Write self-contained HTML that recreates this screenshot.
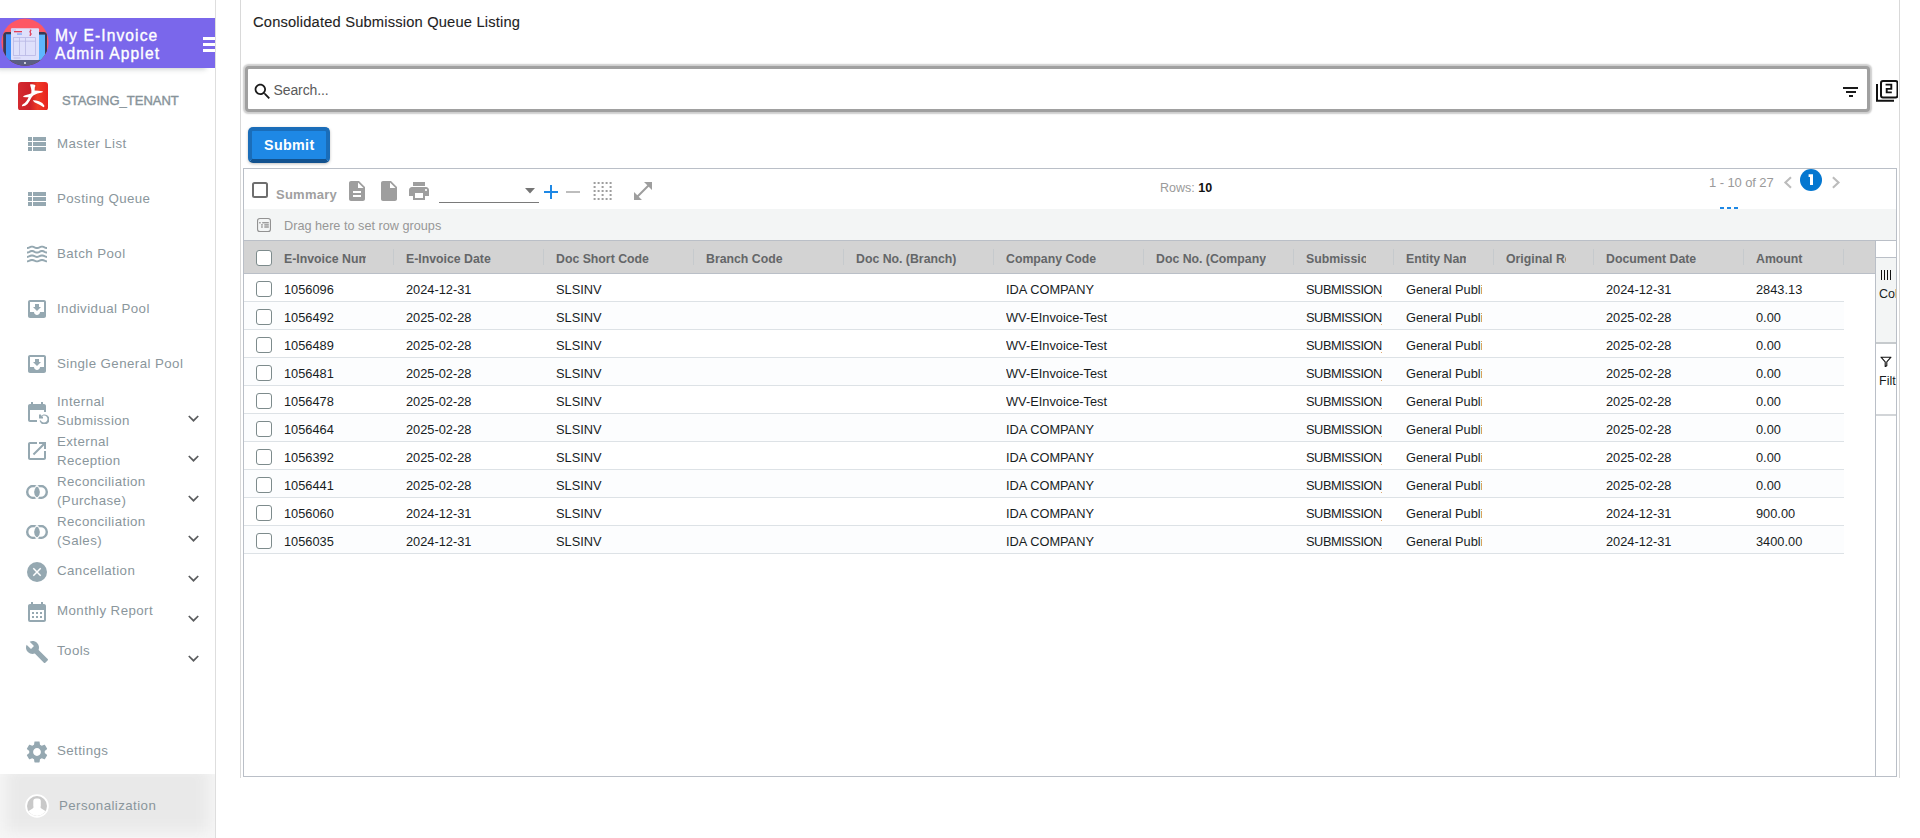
<!DOCTYPE html>
<html><head><meta charset="utf-8">
<style>
*{box-sizing:border-box;margin:0;padding:0}
html,body{width:1920px;height:838px;overflow:hidden;background:#fff;font-family:"Liberation Sans",sans-serif;position:relative}
.a{position:absolute}
/* sidebar */
#sb{position:absolute;left:0;top:0;width:216px;height:838px;border-right:1px solid #dedede;background:#fff}
#hdr{position:absolute;left:0;top:18px;width:215px;height:50px;background:#7a67eb;box-shadow:-6px 4px 5px -3px rgba(50,70,70,.28)}
.ttl{position:absolute;left:55px;color:#fff;font-size:15.6px;letter-spacing:1.1px;white-space:nowrap;-webkit-text-stroke:.35px #fff}
.mi{position:absolute;left:57px;color:#8a969c;font-size:13.3px;letter-spacing:.42px;white-space:nowrap;line-height:19px}
.ic{position:absolute;fill:#95a8b1}
.chev{position:absolute;left:188px;width:11px;height:7px}
/* main */
#main{position:absolute;left:240px;top:0;width:1660px;height:778px;border-left:1px solid #d9d9d9;border-right:1px solid #d9d9d9}
.hc{position:absolute;top:251.3px;font-size:12.3px;font-weight:bold;color:#646668;white-space:nowrap;overflow:hidden;line-height:16px}
.sep{position:absolute;top:249px;width:1px;height:16px;background:#c6cacd}
.row{position:absolute;left:244px;width:1600px;height:28px;border-bottom:1px solid #dde2e6}
.row.o{background:#fcfdfe}
.c{position:absolute;top:8px;font-size:12.8px;color:#181d1f;white-space:nowrap;overflow:hidden;line-height:15px}
.cb{position:absolute;width:16px;height:16px;border:1.6px solid #7d8b8c;border-radius:3px;background:#fff}
</style></head>
<body>
<div id="sb">
  <div id="hdr">
    <svg class="a" style="left:0;top:0" width="52" height="50" viewBox="0 18 52 50">
      <defs><clipPath id="lc"><circle cx="25" cy="42.2" r="23.6"/></clipPath></defs>
      <circle cx="25" cy="42.2" r="23.6" fill="#fd5765"/>
      <g clip-path="url(#lc)">
      <rect x="3.2" y="32" width="43.8" height="40" rx="3.5" fill="#383a55"/>
      <rect x="0" y="60" width="52" height="12" fill="#5b5f82"/>
      <rect x="6" y="34.6" width="39" height="25.4" fill="#5eb6ff"/>
      <rect x="6" y="34.6" width="5.2" height="25.4" fill="#3f8ef7"/>
      <rect x="11" y="28.2" width="28" height="31.8" rx="1" fill="#dfe0fb"/>
      <rect x="11.4" y="28.6" width="4.6" height="3" fill="#cfd0f5"/>
      <rect x="14" y="31" width="8" height="1.3" fill="#e23b55"/>
      <rect x="17" y="33.4" width="5" height="1.3" fill="#7da5f5"/>
      <path d="M31.5 30.3 Q29.2 31 29.8 32.3 Q31.5 33 31.3 34.2 Q30.8 35.3 29.5 35.2 M30.4 29.5 V36" fill="none" stroke="#e23b55" stroke-width=".9"/>
      <rect x="13.5" y="37.6" width="22" height="17.8" fill="none" stroke="#b8b7e5" stroke-width=".8"/>
      <line x1="13.5" y1="41.2" x2="35.5" y2="41.2" stroke="#b8b7e5" stroke-width=".8"/>
      <line x1="19.5" y1="37.6" x2="19.5" y2="55.4" stroke="#b8b7e5" stroke-width=".8"/>
      <line x1="25.5" y1="37.6" x2="25.5" y2="55.4" stroke="#b8b7e5" stroke-width=".8"/>
      <rect x="13.5" y="57.6" width="7" height=".8" fill="#b8b7e5"/>
      <circle cx="25" cy="63" r="0.9" fill="#fff"/>
      </g>
    </svg>
    <div class="ttl" style="top:8.5px;line-height:18px">My E-Invoice<br>Admin Applet</div>
    <div class="a" style="left:203px;top:19px;width:12px;height:3px;background:#fff"></div>
    <div class="a" style="left:203px;top:25px;width:12px;height:3px;background:#fff"></div>
    <div class="a" style="left:203px;top:31px;width:12px;height:3px;background:#fff"></div>
  </div>

  <!-- tenant -->
  <svg class="a" style="left:18px;top:81.5px" width="30" height="28.6" viewBox="0 0 30 28.6">
    <defs><linearGradient id="rg" x1="0" x2="1"><stop offset="0" stop-color="#d42a30"/><stop offset=".4" stop-color="#cc1f28"/><stop offset=".65" stop-color="#ee3a25"/><stop offset="1" stop-color="#e8221f"/></linearGradient></defs>
    <rect x="0" y="0" width="30" height="28.6" rx="3" fill="url(#rg)"/>
    <path fill="#fff" d="M12 2.4 Q14.5 1.8 17.2 2.9 Q17.6 4 16.8 5.5 L16.6 8.5 Q20 8.6 24.8 9.2 Q25.2 10 24 10.6 Q19 11.2 15.6 13.2 Q14.2 14.5 13.2 16 Q11.5 19.5 9.5 22 Q7 24.5 3.9 24.2 Q3.7 23 4.8 22.2 Q6.8 21.5 8.5 19 Q10 16.8 10.6 15.2 Q8 15.2 4.9 15 Q5.5 13.6 8 13 Q11 12.3 13.3 11.2 Q13.6 8 13.1 6.5 Q12.6 4.5 12 2.4Z"/>
    <path fill="#fff" d="M14.8 18.4 Q17.5 18.2 21 19.3 Q25 20.8 26.3 23.5 Q26.5 25.3 25.6 25.2 Q22 22.8 18.5 21.2 Q16.2 20.3 14.8 18.4Z"/>
  </svg>
  <div class="a" style="left:62px;top:92.5px;font-size:13px;color:#87939a;letter-spacing:0px;white-space:nowrap;-webkit-text-stroke:.4px #87939a">STAGING_TENANT</div>

  <svg class="ic" style="left:25px;top:132px" width="24" height="24" viewBox="0 0 24 24"><path d="M3 14h4v-4H3v4zm0 5h4v-4H3v4zM3 9h4V5H3v4zm5 5h13v-4H8v4zm0 5h13v-4H8v4zM8 5v4h13V5H8z"/></svg>
  <div class="mi" style="top:134px">Master List</div>
  <svg class="ic" style="left:25px;top:187px" width="24" height="24" viewBox="0 0 24 24"><path d="M3 14h4v-4H3v4zm0 5h4v-4H3v4zM3 9h4V5H3v4zm5 5h13v-4H8v4zm0 5h13v-4H8v4zM8 5v4h13V5H8z"/></svg>
  <div class="mi" style="top:189px">Posting Queue</div>
  <svg class="ic" style="left:25px;top:242px" width="24" height="24" viewBox="0 0 24 24"><path d="M17 16.99c-1.35 0-2.2.42-2.95.8-.65.33-1.18.6-2.05.6-.9 0-1.4-.25-2.05-.6-.75-.38-1.570-.8-2.95-.8s-2.2.42-2.95.8c-.65.33-1.17.6-2.05.6v1.95c1.35 0 2.2-.42 2.95-.8.65-.33 1.17-.6 2.05-.6s1.4.25 2.05.6c.75.38 1.57.8 2.95.8s2.2-.42 2.95-.8c.65-.33 1.18-.6 2.05-.6.9 0 1.4.25 2.05.6.75.38 1.58.8 2.95.8v-1.950c-.9 0-1.4-.25-2.05-.6-.75-.38-1.6-.8-2.95-.8zm0-4.45c-1.35 0-2.2.43-2.95.8-.65.32-1.18.6-2.05.6-.9 0-1.4-.25-2.05-.6-.75-.38-1.57-.8-2.95-.8s-2.2.43-2.95.8c-.65.32-1.17.6-2.05.6v1.95c1.35 0 2.2-.43 2.95-.8.65-.35 1.15-.6 2.05-.6s1.4.25 2.05.6c.75.38 1.57.8 2.95.8s2.2-.43 2.95-.8c.65-.35 1.15-.6 2.05-.6.9 0 1.4.25 2.05.6.75.38 1.58.8 2.95.8v-1.95c-.9 0-1.4-.25-2.05-.6-.75-.38-1.6-.8-2.95-.8zm2.95-8.08c-.75-.38-1.58-.8-2.95-.8s-2.2.42-2.95.8c-.65.32-1.18.6-2.05.6-.9 0-1.4-.25-2.05-.6-.75-.37-1.57-.8-2.95-.8s-2.2.42-2.95.8c-.65.33-1.17.6-2.05.6v1.93c1.35 0 2.2-.43 2.95-.8.65-.33 1.17-.6 2.05-.6s1.4.25 2.05.6c.75.38 1.57.8 2.950.8s2.2-.43 2.95-.8c.65-.32 1.18-.6 2.05-.6.9 0 1.4.25 2.05.6.75.38 1.58.8 2.95.8V5.04c-.9 0-1.4-.25-2.05-.58zM17 8.09c-1.35 0-2.2.43-2.95.8-.65.35-1.15.6-2.05.6s-1.4-.25-2.05-.6c-.75-.38-1.57-.8-2.95-.8s-2.2.43-2.95.8c-.65.35-1.15.6-2.05.6v1.95c1.35 0 2.2-.43 2.95-.8.65-.32 1.18-.6 2.05-.6s1.4.25 2.05.6c.75.38 1.57.8 2.95.8s2.2-.43 2.95-.8c.65-.32 1.18-.6 2.05-.6.9 0 1.4.25 2.05.6.75.38 1.58.8 2.95.8V9.49c-.9 0-1.4-.25-2.05-.6-.75-.38-1.6-.8-2.95-.8z"/></svg>
  <div class="mi" style="top:244px">Batch Pool</div>
  <svg class="ic" style="left:25px;top:297px" width="24" height="24" viewBox="0 0 24 24"><path d="M19 3H4.99c-1.11 0-1.98.9-1.98 2L3 19c0 1.1.88 2 1.99 2H19c1.1 0 2-.9 2-2V5c0-1.1-.9-2-2-2zm0 12h-4c0 1.66-1.35 3-3 3s-3-1.34-3-3H4.99V5H19v10zm-3-5h-2V7h-4v3H8l4 4 4-4z"/></svg>
  <div class="mi" style="top:299px">Individual Pool</div>
  <svg class="ic" style="left:25px;top:352px" width="24" height="24" viewBox="0 0 24 24"><path d="M19 3H4.99c-1.11 0-1.98.9-1.98 2L3 19c0 1.1.88 2 1.99 2H19c1.1 0 2-.9 2-2V5c0-1.1-.9-2-2-2zm0 12h-4c0 1.66-1.35 3-3 3s-3-1.34-3-3H4.99V5H19v10zm-3-5h-2V7h-4v3H8l4 4 4-4z"/></svg>
  <div class="mi" style="top:354px">Single General Pool</div>

  <svg class="ic" style="left:25px;top:400px" width="24" height="24" viewBox="0 0 24 24"><path d="M21 12V6c0-1.1-.9-2-2-2h-1V2h-2v2H8V2H6v2H5c-1.1 0-2 .9-2 2v14c0 1.1.9 2 2 2h7v-2H5V10h14v2h2zm-5.36 8c.43 1.45 1.77 2.5 3.36 2.5 1.93 0 3.5-1.57 3.5-3.5s-1.57-3.5-3.5-3.5c-.95 0-1.82.38-2.45 1H18v2h-4v-4h2v1.43c.9-.88 2.14-1.43 3.5-1.43 2.76 0 5 2.24 5 5s-2.24 5-5 5c-2.42 0-4.44-1.72-4.9-4h1.54z"/></svg>
  <div class="mi" style="top:392px">Internal<br>Submission</div>
  <svg class="ic" style="left:25px;top:439px" width="24" height="24" viewBox="0 0 24 24"><path d="M19 19H5V5h7V3H5c-1.11 0-2 .9-2 2v14c0 1.1.89 2 2 2h14c1.1 0 2-.9 2-2v-7h-2v7zM14 3v2h3.59l-9.830 9.83 1.41 1.41L19 6.41V10h2V3h-7z"/></svg>
  <div class="mi" style="top:432px">External<br>Reception</div>
  <svg class="ic" style="left:25px;top:479.8px" width="24" height="24" viewBox="0 0 24 24"><defs><mask id="mL"><rect x="0" y="0" width="24" height="24" fill="#fff"/><circle cx="15.8" cy="12" r="7.8" fill="#000"/></mask><mask id="mR"><rect x="0" y="0" width="24" height="24" fill="#fff"/><circle cx="8.2" cy="12" r="7.8" fill="#000"/></mask><clipPath id="cL"><circle cx="8.2" cy="12" r="6.7"/></clipPath></defs><circle cx="8.2" cy="12" r="6" fill="none" stroke="#95a8b1" stroke-width="2.4" mask="url(#mL)"/><circle cx="15.8" cy="12" r="6" fill="none" stroke="#95a8b1" stroke-width="2.4" mask="url(#mR)"/><circle cx="15.8" cy="12" r="6.7" clip-path="url(#cL)"/></svg>
  <div class="mi" style="top:472px">Reconciliation<br>(Purchase)</div>
  <svg class="ic" style="left:25px;top:519.8px" width="24" height="24" viewBox="0 0 24 24"><circle cx="8.2" cy="12" r="6" fill="none" stroke="#95a8b1" stroke-width="2.4" mask="url(#mL)"/><circle cx="15.8" cy="12" r="6" fill="none" stroke="#95a8b1" stroke-width="2.4" mask="url(#mR)"/><circle cx="15.8" cy="12" r="6.7" clip-path="url(#cL)"/></svg>
  <div class="mi" style="top:512px">Reconciliation<br>(Sales)</div>
  <svg class="ic" style="left:25px;top:560px" width="24" height="24" viewBox="0 0 24 24"><circle cx="12" cy="12" r="10"/><path d="M8.3 8.3 L15.7 15.7 M15.7 8.3 L8.3 15.7" stroke="#fff" stroke-width="1.5"/></svg>
  <div class="mi" style="top:561px">Cancellation</div>
  <svg class="ic" style="left:25px;top:600px" width="24" height="24" viewBox="0 0 24 24"><path d="M19 4h-1V2h-2v2H8V2H6v2H5c-1.11 0-1.99.9-1.99 2L3 20a2 2 0 0 0 2 2h14c1.1 0 2-.9 2-2V6c0-1.1-.9-2-2-2zm0 16H5V10h14v10zM9 14H7v-2h2v2zm4 0h-2v-2h2v2zm4 0h-2v-2h2v2zm-8 4H7v-2h2v2zm4 0h-2v-2h2v2zm4 0h-2v-2h2v2z"/></svg>
  <div class="mi" style="top:601px">Monthly Report</div>
  <svg class="ic" style="left:25px;top:640px" width="24" height="24" viewBox="0 0 24 24"><path d="M22.7 19l-9.1-9.1c.9-2.3.4-5-1.5-6.9-2-2-5-2.4-7.4-1.3L9 6 6 9 1.6 4.7C.4 7.100.9 10.1 2.9 12.1c1.9 1.9 4.6 2.4 6.9 1.5l9.1 9.1c.4.4 1 .4 1.4 0l2.3-2.3c.5-.4.5-1.1.1-1.4z"/></svg>
  <div class="mi" style="top:641px">Tools</div>

  <svg class="chev" style="top:415px" viewBox="0 0 11 7"><path fill="none" stroke="#5a5c5e" stroke-width="1.7" d="M.8 1 L5.5 5.7 L10.2 1"/></svg>
  <svg class="chev" style="top:455px" viewBox="0 0 11 7"><path fill="none" stroke="#5a5c5e" stroke-width="1.7" d="M.8 1 L5.5 5.7 L10.2 1"/></svg>
  <svg class="chev" style="top:495px" viewBox="0 0 11 7"><path fill="none" stroke="#5a5c5e" stroke-width="1.7" d="M.8 1 L5.5 5.7 L10.2 1"/></svg>
  <svg class="chev" style="top:535px" viewBox="0 0 11 7"><path fill="none" stroke="#5a5c5e" stroke-width="1.7" d="M.8 1 L5.5 5.7 L10.2 1"/></svg>
  <svg class="chev" style="top:575px" viewBox="0 0 11 7"><path fill="none" stroke="#5a5c5e" stroke-width="1.7" d="M.8 1 L5.5 5.7 L10.2 1"/></svg>
  <svg class="chev" style="top:615px" viewBox="0 0 11 7"><path fill="none" stroke="#5a5c5e" stroke-width="1.7" d="M.8 1 L5.5 5.7 L10.2 1"/></svg>
  <svg class="chev" style="top:655px" viewBox="0 0 11 7"><path fill="none" stroke="#5a5c5e" stroke-width="1.7" d="M.8 1 L5.5 5.7 L10.2 1"/></svg>

  <svg class="ic" style="left:24px;top:738.6px" width="26" height="26" viewBox="0 0 24 24"><path d="M19.14 12.94c.04-.3.06-.61.06-.94 0-.32-.02-.64-.07-.94l2.03-1.58c.18-.14.23-.41.12-.61l-1.92-3.32c-.12-.22-.37-.29-.59-.22l-2.39.96c-.5-.38-1.03-.7-1.62-.94l-.36-2.54c-.04-.24-.24-.41-.48-.41h-3.84c-.24 0-.43.17-.47.41l-.36 2.54c-.59.24-1.13.57-1.62.94l-2.39-.96c-.22-.08-.47 0-.59.22L2.74 8.87c-.12.21-.08.47.12.61l2.03 1.58c-.05.3-.09.63-.09.94s.02.64.07.94l-2.03 1.58c-.18.14-.23.41-.12.61l1.92 3.32c.12.22.37.29.59.22l2.39-.96c.5.38 1.03.7 1.62.94l.36 2.54c.05.24.24.41.48.41h3.84c.24 0 .44-.17.47-.41l.36-2.54c.59-.24 1.13-.56 1.62-.94l2.39.96c.22.08.47 0 .59-.22l1.92-3.32c.12-.22.07-.47-.12-.61l-2.01-1.58zM12 15.6c-1.98 0-3.6-1.62-3.6-3.6s1.62-3.6 3.6-3.6 3.6 1.62 3.6 3.6-1.62 3.6-3.6 3.6z"/></svg>
  <div class="mi" style="top:741px">Settings</div>

  <div class="a" style="left:0;top:774px;width:215px;height:64px;background:#e9e9e9;box-shadow:inset 16px 0 16px -10px #f6f6f6,inset -16px 0 16px -10px #f6f6f6,inset 0 -16px 16px -10px #f6f6f6"></div>
  <svg class="a" style="left:25px;top:793.5px" width="24" height="24" viewBox="0 0 24 24">
    <defs><clipPath id="av"><circle cx="12" cy="12" r="10"/></clipPath></defs>
    <circle cx="12" cy="12" r="11.8" fill="#fff"/>
    <circle cx="12" cy="12" r="10" fill="#c9c9c9"/>
    <g clip-path="url(#av)">
    <path d="M8.3 12.3 L8.3 7.2 Q8.3 4.4 11 4.4 L13 4.4 Q15.8 4.4 15.8 7.2 L15.8 12.3 Q15 13.2 16 14.2 Q18 15.5 20 16.8 L21 24 L3 24 L4 16.8 Q6 15.5 8 14.2 Q9 13.2 8.3 12.3Z" fill="#fff"/>
    </g>
  </svg>
  <div class="mi" style="left:59px;top:796px">Personalization</div>
</div>

<div id="main"></div>

<div class="a" style="left:253px;top:13.5px;font-size:14.7px;color:#1f1f1f;letter-spacing:.18px;white-space:nowrap;-webkit-text-stroke:.12px #1f1f1f">Consolidated Submission Queue Listing</div>
<!-- search -->
<div class="a" style="left:245px;top:66px;width:1625px;height:46px;border-radius:4px;background:#fff;border:3px solid #a0a0a0;box-shadow:0 0 1.5px 1.5px rgba(0,0,0,.2)"></div>
<svg class="a" style="left:252px;top:81px" width="21" height="21" viewBox="0 0 24 24"><path fill="#1a1a1a" d="M15.5 14h-.79l-.28-.27C15.41 12.59 16 11.11 16 9.5 16 5.91 13.09 3 9.5 3S3 5.91 3 9.5 5.91 16 9.5 16c1.61 0 3.09-.59 4.23-1.57l.27.28v.79l5 4.99L20.49 19l-4.99-5zm-6 0C7.01 14 5 11.99 5 9.5S7.01 5 9.5 5 14 7.01 14 9.5 11.99 14 9.5 14z"/></svg>
<div class="a" style="left:273.5px;top:81.5px;font-size:14px;color:#5a5a5a;letter-spacing:-.1px;white-space:nowrap">Search...</div>
<div class="a" style="left:1843px;top:87px;width:15px;height:2px;background:#1a1a1a"></div>
<div class="a" style="left:1846px;top:91px;width:10px;height:2px;background:#1a1a1a"></div>
<div class="a" style="left:1849px;top:95px;width:4px;height:2px;background:#1a1a1a"></div>
<svg class="a" style="left:1876px;top:80px" width="22" height="22" viewBox="0 0 22 22">
  <path d="M1 4 V20.7 H18" fill="none" stroke="#111" stroke-width="2"/>
  <rect x="5" y="1" width="16.5" height="16.5" rx="2" fill="none" stroke="#111" stroke-width="2"/>
  <path d="M9.6 4.6 H15.3 V8.9 H10.7 V12.4 H15.8" fill="none" stroke="#111" stroke-width="1.9"/>
</svg>
<!-- submit -->
<div class="a" style="left:248px;top:127px;width:82px;height:36px;border-radius:5px;background:#1e88e5;border:4px solid #1a6db9;border-bottom-color:#12528f;box-shadow:0 1px 3px rgba(0,0,0,.25)"></div>
<div class="a" style="left:264px;top:137px;font-size:14.3px;font-weight:bold;color:#fff;letter-spacing:.35px;white-space:nowrap">Submit</div>

<!-- table container -->
<div class="a" style="left:243px;top:168px;width:1654px;height:609px;border:1px solid #babfc7;background:#fff"></div>
<div class="cb" style="left:252px;top:182px;border:2px solid #6e6e6e;border-radius:2.5px"></div>
<div class="a" style="left:276px;top:187px;font-size:13px;font-weight:bold;color:#a0a0a0;letter-spacing:.25px;white-space:nowrap">Summary</div>
<svg class="a" style="left:345px;top:179px" width="24" height="24" viewBox="0 0 24 24"><path fill="#9e9e9e" d="M14 2H6c-1.1 0-1.99.9-1.99 2L4 20c0 1.1.89 2 1.99 2H18c1.1 0 2-.9 2-2V8l-6-6zm2 16H8v-2h8v2zm0-4H8v-2h8v2zm-3-5V3.5L18.5 9H13z"/></svg>
<svg class="a" style="left:377px;top:179px" width="24" height="24" viewBox="0 0 24 24"><path fill="#9e9e9e" d="M6 2c-1.1 0-1.99.9-1.99 2L4 20c0 1.1.89 2 1.99 2H18c1.1 0 2-.9 2-2V8l-6-6H6zm7 7V3.5L18.5 9H13z"/></svg>
<svg class="a" style="left:407px;top:179px" width="24" height="24" viewBox="0 0 24 24"><path fill="#9e9e9e" d="M19 8H5c-1.66 0-3 1.34-3 3v6h4v4h12v-4h4v-6c0-1.66-1.34-3-3-3zm-3 11H8v-5h8v5zm3-7c-.55 0-1-.45-1-1s.45-1 1-1 1 .45 1 1-.45 1-1 1zm-1-9H6v4h12V3z"/></svg>
<div class="a" style="left:439px;top:202px;width:100px;height:1px;background:#7a7a7a"></div>
<svg class="a" style="left:525px;top:188px" width="10" height="6" viewBox="0 0 10 6"><path d="M0 0H10L5 5.5Z" fill="#757575"/></svg>
<svg class="a" style="left:538.5px;top:179.75px" width="24" height="24" viewBox="0 0 24 24"><path fill="#1e88e5" d="M19 13h-6v6h-2v-6H5v-2h6V5h2v6h6v2z"/></svg>
<div class="a" style="left:566px;top:191px;width:14px;height:2px;background:#bdbdbd"></div>
<svg class="a" style="left:593px;top:182px" width="20" height="20" viewBox="0 0 20 20" fill="#9e9e9e">
  <rect x=".6" y="0" width="2" height="2"/><rect x="4.6" y="0" width="2" height="2"/><rect x="8.6" y="0" width="2" height="2"/><rect x="12.6" y="0" width="2" height="2"/><rect x="16.6" y="0" width="2" height="2"/>
  <rect x=".6" y="4" width="2" height="2"/><rect x="8.6" y="4" width="2" height="2"/><rect x="16.6" y="4" width="2" height="2"/>
  <rect x=".6" y="8" width="2" height="2"/><rect x="4.6" y="8" width="2" height="2"/><rect x="8.6" y="8" width="2" height="2"/><rect x="12.6" y="8" width="2" height="2"/><rect x="16.6" y="8" width="2" height="2"/>
  <rect x=".6" y="12" width="2" height="2"/><rect x="8.6" y="12" width="2" height="2"/><rect x="16.6" y="12" width="2" height="2"/>
  <rect x=".6" y="16" width="2" height="2"/><rect x="4.6" y="16" width="2" height="2"/><rect x="8.6" y="16" width="2" height="2"/><rect x="12.6" y="16" width="2" height="2"/><rect x="16.6" y="16" width="2" height="2"/>
</svg>
<svg class="a" style="left:630.5px;top:179px" width="24" height="24" viewBox="0 0 24 24"><path fill="#9e9e9e" d="M21 11V3h-8l3.29 3.29-10 10L3 13v8h8l-3.29-3.29 10-10z"/></svg>
<div class="a" style="left:1160px;top:181px;font-size:12.5px;color:#9a9a9a;white-space:nowrap">Rows: <b style="color:#111">10</b></div>
<div class="a" style="left:1709px;top:174.6px;font-size:13px;color:#9a9a9a;letter-spacing:-.1px;white-space:nowrap">1 - 10 of 27</div>
<svg class="a" style="left:1780px;top:175.5px" width="16" height="13" viewBox="0 0 16 13"><path d="M11 1.3 L5.4 6.5 L11 11.7" fill="none" stroke="#bcbcbc" stroke-width="2.1"/></svg>
<svg class="a" style="left:1800px;top:169px" width="22" height="22" viewBox="0 0 22 22"><circle cx="11" cy="11" r="11" fill="#0477d0"/><path d="M8.6 5.3 H13 V15.9 H10 V8 H8.6 Z" fill="#fff"/></svg>
<svg class="a" style="left:1828px;top:175.5px" width="16" height="13" viewBox="0 0 16 13"><path d="M4.9 1.3 L10.5 6.5 L4.9 11.7" fill="none" stroke="#bcbcbc" stroke-width="2.1"/></svg>
<div class="a" style="left:1720px;top:207px;width:4px;height:2px;background:#1e88e5"></div>
<div class="a" style="left:1727px;top:207px;width:4px;height:2px;background:#1e88e5"></div>
<div class="a" style="left:1734px;top:207px;width:4px;height:2px;background:#1e88e5"></div>

<!-- drag row -->
<div class="a" style="left:244px;top:209px;width:1652px;height:32px;background:#f3f5f5;border-bottom:1px solid #babfc7"></div>
<svg class="a" style="left:257px;top:218px" width="14" height="14" viewBox="0 0 14 14"><rect x=".55" y=".55" width="12.9" height="12.9" rx="2.3" fill="none" stroke="#929292" stroke-width="1.1"/><g fill="#939393"><rect x="2.1" y="4.1" width="1.6" height="1.3"/><rect x="5.2" y="4.1" width="6.6" height="1.3"/><rect x="4.1" y="6.2" width="1.7" height="1.4"/><rect x="7.3" y="6.2" width="4.5" height="1.4"/><rect x="4.1" y="8.3" width="1.7" height="1.4"/><rect x="7.3" y="8.3" width="4.5" height="1.4"/></g></svg>
<div class="a" style="left:284px;top:219px;font-size:12.7px;color:#979797;white-space:nowrap">Drag here to set row groups</div>

<!-- header -->
<div class="a" style="left:244px;top:241px;width:1631px;height:33px;background:#d3d3d3;border-bottom:1px solid #babfc7"></div>
<!-- side panel -->
<div class="a" style="left:1875px;top:241px;width:1px;height:535px;background:#babfc7"></div>
<div class="a" style="left:1876px;top:257px;width:20px;height:1px;background:#babfc7"></div>
<div class="a" style="left:1876px;top:258px;width:20px;height:86px;background:#f3f5f5;border-bottom:2px solid #c6cacd"></div>
<div class="a" style="left:1881px;top:270px;width:1.4px;height:10px;background:#111"></div>
<div class="a" style="left:1884px;top:270px;width:1.4px;height:10px;background:#111"></div>
<div class="a" style="left:1887px;top:270px;width:1.4px;height:10px;background:#111"></div>
<div class="a" style="left:1890px;top:270px;width:1.4px;height:10px;background:#111"></div>
<div class="a" style="left:1876px;top:287px;width:20px;overflow:hidden;font-size:12.5px;color:#181d1f;padding-left:3px;white-space:nowrap">Columns</div>
<svg class="a" style="left:1880px;top:356px" width="12" height="11" viewBox="0 0 12 11"><path d="M1 1.2 H11 L6.8 5.8 V9.8 L5.2 10.6 V5.8 Z" fill="none" stroke="#111" stroke-width="1.1" stroke-linejoin="round"/></svg>
<div class="a" style="left:1876px;top:374px;width:20px;overflow:hidden;font-size:12.5px;color:#181d1f;padding-left:3px;white-space:nowrap">Filters</div>
<div class="a" style="left:1876px;top:414px;width:20px;height:2px;background:#d2d5d8"></div>

<div class="hc" style="left:284px;width:82px">E-Invoice Num</div>
<div class="sep" style="left:393px"></div>
<div class="hc" style="left:406px;width:110px">E-Invoice Date</div>
<div class="sep" style="left:543px"></div>
<div class="hc" style="left:556px;width:110px">Doc Short Code</div>
<div class="sep" style="left:693px"></div>
<div class="hc" style="left:706px;width:110px">Branch Code</div>
<div class="sep" style="left:843px"></div>
<div class="hc" style="left:856px;width:110px">Doc No. (Branch)</div>
<div class="sep" style="left:993px"></div>
<div class="hc" style="left:1006px;width:110px">Company Code</div>
<div class="sep" style="left:1143px"></div>
<div class="hc" style="left:1156px;width:110px">Doc No. (Company)</div>
<div class="sep" style="left:1293px"></div>
<div class="hc" style="left:1306px;width:60px">Submission</div>
<div class="sep" style="left:1393px"></div>
<div class="hc" style="left:1406px;width:60px">Entity Name</div>
<div class="sep" style="left:1493px"></div>
<div class="hc" style="left:1506px;width:60px">Original Ref</div>
<div class="sep" style="left:1593px"></div>
<div class="hc" style="left:1606px;width:110px">Document Date</div>
<div class="sep" style="left:1743px"></div>
<div class="hc" style="left:1756px;width:60px">Amount</div>
<div class="sep" style="left:1843px"></div>
<div class="cb" style="left:256px;top:250px"></div>
<div class="row" style="top:274px"><div class="cb" style="left:12px;top:7px"></div><div class="c" style="left:40px;width:98px">1056096</div><div class="c" style="left:162px;width:126px">2024-12-31</div><div class="c" style="left:312px;width:126px">SLSINV</div><div class="c" style="left:762px;width:126px">IDA COMPANY</div><div class="c" style="left:1062px;width:76px;letter-spacing:-.45px">SUBMISSION_QUEUE</div><div class="c" style="left:1162px;width:76px">General Public</div><div class="c" style="left:1362px;width:126px">2024-12-31</div><div class="c" style="left:1512px;width:76px">2843.13</div></div>
<div class="row o" style="top:302px"><div class="cb" style="left:12px;top:7px"></div><div class="c" style="left:40px;width:98px">1056492</div><div class="c" style="left:162px;width:126px">2025-02-28</div><div class="c" style="left:312px;width:126px">SLSINV</div><div class="c" style="left:762px;width:126px">WV-EInvoice-Test</div><div class="c" style="left:1062px;width:76px;letter-spacing:-.45px">SUBMISSION_QUEUE</div><div class="c" style="left:1162px;width:76px">General Public</div><div class="c" style="left:1362px;width:126px">2025-02-28</div><div class="c" style="left:1512px;width:76px">0.00</div></div>
<div class="row" style="top:330px"><div class="cb" style="left:12px;top:7px"></div><div class="c" style="left:40px;width:98px">1056489</div><div class="c" style="left:162px;width:126px">2025-02-28</div><div class="c" style="left:312px;width:126px">SLSINV</div><div class="c" style="left:762px;width:126px">WV-EInvoice-Test</div><div class="c" style="left:1062px;width:76px;letter-spacing:-.45px">SUBMISSION_QUEUE</div><div class="c" style="left:1162px;width:76px">General Public</div><div class="c" style="left:1362px;width:126px">2025-02-28</div><div class="c" style="left:1512px;width:76px">0.00</div></div>
<div class="row o" style="top:358px"><div class="cb" style="left:12px;top:7px"></div><div class="c" style="left:40px;width:98px">1056481</div><div class="c" style="left:162px;width:126px">2025-02-28</div><div class="c" style="left:312px;width:126px">SLSINV</div><div class="c" style="left:762px;width:126px">WV-EInvoice-Test</div><div class="c" style="left:1062px;width:76px;letter-spacing:-.45px">SUBMISSION_QUEUE</div><div class="c" style="left:1162px;width:76px">General Public</div><div class="c" style="left:1362px;width:126px">2025-02-28</div><div class="c" style="left:1512px;width:76px">0.00</div></div>
<div class="row" style="top:386px"><div class="cb" style="left:12px;top:7px"></div><div class="c" style="left:40px;width:98px">1056478</div><div class="c" style="left:162px;width:126px">2025-02-28</div><div class="c" style="left:312px;width:126px">SLSINV</div><div class="c" style="left:762px;width:126px">WV-EInvoice-Test</div><div class="c" style="left:1062px;width:76px;letter-spacing:-.45px">SUBMISSION_QUEUE</div><div class="c" style="left:1162px;width:76px">General Public</div><div class="c" style="left:1362px;width:126px">2025-02-28</div><div class="c" style="left:1512px;width:76px">0.00</div></div>
<div class="row o" style="top:414px"><div class="cb" style="left:12px;top:7px"></div><div class="c" style="left:40px;width:98px">1056464</div><div class="c" style="left:162px;width:126px">2025-02-28</div><div class="c" style="left:312px;width:126px">SLSINV</div><div class="c" style="left:762px;width:126px">IDA COMPANY</div><div class="c" style="left:1062px;width:76px;letter-spacing:-.45px">SUBMISSION_QUEUE</div><div class="c" style="left:1162px;width:76px">General Public</div><div class="c" style="left:1362px;width:126px">2025-02-28</div><div class="c" style="left:1512px;width:76px">0.00</div></div>
<div class="row" style="top:442px"><div class="cb" style="left:12px;top:7px"></div><div class="c" style="left:40px;width:98px">1056392</div><div class="c" style="left:162px;width:126px">2025-02-28</div><div class="c" style="left:312px;width:126px">SLSINV</div><div class="c" style="left:762px;width:126px">IDA COMPANY</div><div class="c" style="left:1062px;width:76px;letter-spacing:-.45px">SUBMISSION_QUEUE</div><div class="c" style="left:1162px;width:76px">General Public</div><div class="c" style="left:1362px;width:126px">2025-02-28</div><div class="c" style="left:1512px;width:76px">0.00</div></div>
<div class="row o" style="top:470px"><div class="cb" style="left:12px;top:7px"></div><div class="c" style="left:40px;width:98px">1056441</div><div class="c" style="left:162px;width:126px">2025-02-28</div><div class="c" style="left:312px;width:126px">SLSINV</div><div class="c" style="left:762px;width:126px">IDA COMPANY</div><div class="c" style="left:1062px;width:76px;letter-spacing:-.45px">SUBMISSION_QUEUE</div><div class="c" style="left:1162px;width:76px">General Public</div><div class="c" style="left:1362px;width:126px">2025-02-28</div><div class="c" style="left:1512px;width:76px">0.00</div></div>
<div class="row" style="top:498px"><div class="cb" style="left:12px;top:7px"></div><div class="c" style="left:40px;width:98px">1056060</div><div class="c" style="left:162px;width:126px">2024-12-31</div><div class="c" style="left:312px;width:126px">SLSINV</div><div class="c" style="left:762px;width:126px">IDA COMPANY</div><div class="c" style="left:1062px;width:76px;letter-spacing:-.45px">SUBMISSION_QUEUE</div><div class="c" style="left:1162px;width:76px">General Public</div><div class="c" style="left:1362px;width:126px">2024-12-31</div><div class="c" style="left:1512px;width:76px">900.00</div></div>
<div class="row o" style="top:526px"><div class="cb" style="left:12px;top:7px"></div><div class="c" style="left:40px;width:98px">1056035</div><div class="c" style="left:162px;width:126px">2024-12-31</div><div class="c" style="left:312px;width:126px">SLSINV</div><div class="c" style="left:762px;width:126px">IDA COMPANY</div><div class="c" style="left:1062px;width:76px;letter-spacing:-.45px">SUBMISSION_QUEUE</div><div class="c" style="left:1162px;width:76px">General Public</div><div class="c" style="left:1362px;width:126px">2024-12-31</div><div class="c" style="left:1512px;width:76px">3400.00</div></div>

</body></html>
